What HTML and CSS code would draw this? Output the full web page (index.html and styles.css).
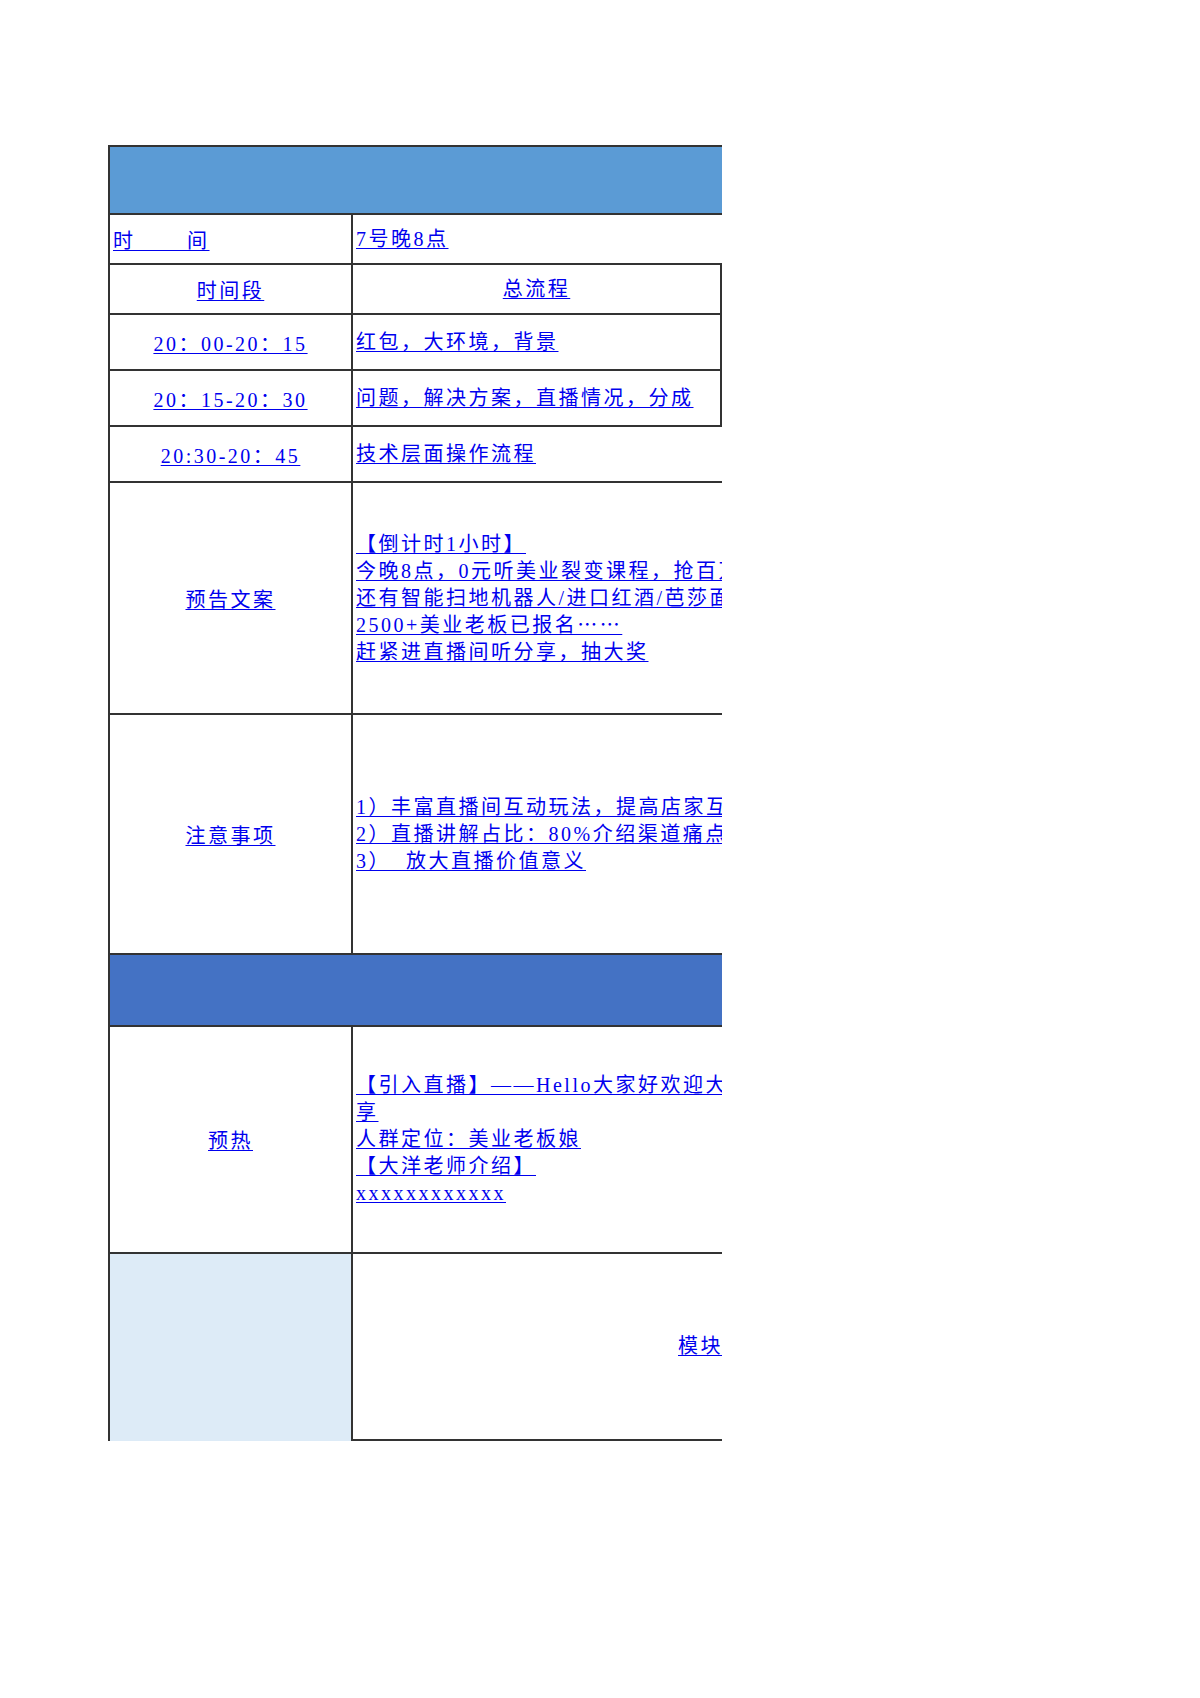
FILE: index.html
```html
<!DOCTYPE html>
<html lang="zh-CN">
<head>
<meta charset="utf-8">
<title>直播流程</title>
<link rel="stylesheet" href="styles.css">
</head>
<body>
<div class="sheet">
  <div class="row band band-a"></div>

  <div class="row h50">
    <div class="c1 start"><span class="u">时&emsp;&emsp;&thinsp;间</span></div>
    <div class="c2 wide"><span class="u">7号晚8点</span></div>
  </div>

  <div class="row h50">
    <div class="c1"><span class="u">时间段</span></div>
    <div class="c2 boxed center"><span class="u">总流程</span></div>
  </div>

  <div class="row h56">
    <div class="c1"><span class="u">20：00-20：15</span></div>
    <div class="c2 boxed"><span class="u">红包，大环境，背景</span></div>
  </div>

  <div class="row h56">
    <div class="c1"><span class="u">20：15-20：30</span></div>
    <div class="c2 boxed"><span class="u">问题，解决方案，直播情况，分成</span></div>
  </div>

  <div class="row h56">
    <div class="c1"><span class="u">20:30-20：45</span></div>
    <div class="c2 wide"><span class="u">技术层面操作流程</span></div>
  </div>

  <div class="row h232">
    <div class="c1"><span class="u">预告文案</span></div>
    <div class="c2 wide"><span class="u">【倒计时1小时】
今晚8点，0元听美业裂变课程，抢百万豪礼！
还有智能扫地机器人/进口红酒/芭莎面膜等你来拿
2500+美业老板已报名⋯⋯
赶紧进直播间听分享，抽大奖</span></div>
  </div>

  <div class="row h240">
    <div class="c1"><span class="u">注意事项</span></div>
    <div class="c2 wide"><span class="u">1）丰富直播间互动玩法，提高店家互动积极性
2）直播讲解占比：80%介绍渠道痛点，20%介绍产品
3）  放大直播价值意义</span></div>
  </div>

  <div class="row band band-b"></div>

  <div class="row h227">
    <div class="c1"><span class="u">预热</span></div>
    <div class="c2 wide"><span class="u">【引入直播】——Hello大家好欢迎大家来到今晚的直播分
享
人群定位：美业老板娘
【大洋老师介绍】
xxxxxxxxxxxx</span></div>
  </div>

  <div class="row h187 last">
    <div class="c1 tint"></div>
    <div class="c2 wide module"><span class="u">模块一</span></div>
  </div>
</div>
</body>
</html>
```

FILE: styles.css
```css
html, body {
  margin: 0;
  padding: 0;
  background: #ffffff;
}

body {
  font-family: "Liberation Serif", "Noto Sans CJK SC", serif;
  font-size: 20px;
  letter-spacing: 2.5px;
  color: #0000ee;
}

.sheet {
  margin: 145px 0 0 108px;
  width: 614px;
  box-sizing: border-box;
  border-top: 2px solid #333333;
  border-left: 2px solid #333333;
  overflow: hidden;
}

.row {
  display: flex;
  box-sizing: border-box;
  border-bottom: 2px solid #333333;
}

.band { height: 68px; }
.band-a { background: #5b9bd5; }
.band-b { background: #4472c4; height: 72px; }

.h50 { height: 50px; }
.h56 { height: 56px; }
.h232 { height: 232px; }
.h240 { height: 240px; }
.h227 { height: 227px; }
.h187 { height: 187px; }

.c1 {
  flex: none;
  width: 243px;
  box-sizing: border-box;
  border-right: 2px solid #333333;
  display: flex;
  align-items: center;
  justify-content: center;
  white-space: pre;
}

.c1.start {
  justify-content: flex-start;
  padding-left: 3px;
}

.c2 {
  flex: none;
  box-sizing: border-box;
  display: flex;
  align-items: center;
  padding-left: 3px;
  white-space: pre;
  line-height: 27px;
}

.c2.boxed {
  width: 369px;
  border-right: 2px solid #333333;
}

.c2.center {
  justify-content: center;
  padding-left: 0;
}

.c2.wide {
  width: 900px;
}

.u {
  text-decoration: underline;
  text-decoration-thickness: 1px;
  text-underline-offset: 2px;
}

.row.last {
  border-bottom: none;
}

.c1.tint {
  background: #ddebf7;
}

.c2.module {
  border-bottom: 2px solid #333333;
  padding-left: 325px;
}
```
